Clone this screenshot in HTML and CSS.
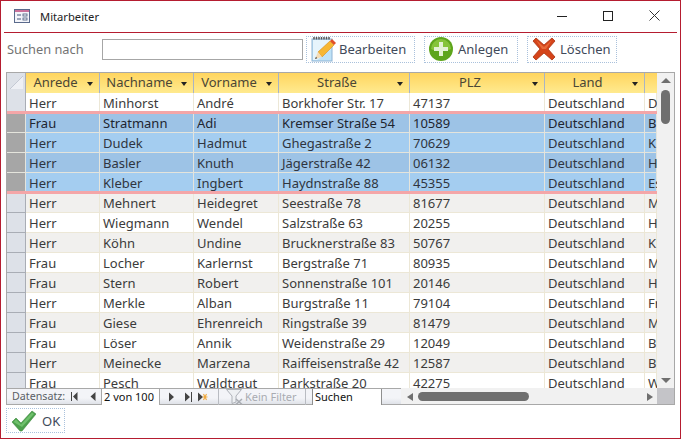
FILE: index.html
```html
<!DOCTYPE html>
<html lang="de">
<head>
<meta charset="utf-8">
<title>Mitarbeiter</title>
<link rel="stylesheet" href="styles.css">
</head>
<body>
<div class="window">
  <header class="titlebar">
    <svg class="title-icon" width="17" height="15" viewBox="0 0 17 15"><rect x=".5" y=".5" width="15" height="13" fill="#f4f5fa" stroke="#5a6a8c"/><rect x="1" y="1" width="14" height="2" fill="#c9709a"/><path d="M3 6h4M3 10h4" stroke="#47597c"/><rect x="9" y="5" width="4" height="2" fill="#fff" stroke="#47597c" stroke-width=".8"/><rect x="9" y="9" width="4" height="2" fill="#fff" stroke="#47597c" stroke-width=".8"/></svg>
    <span class="title-text">Mitarbeiter</span>
    <div class="win-controls">
      <svg width="10" height="10" viewBox="0 0 10 10"><path d="M0 5.500h10" stroke="#222"/></svg>
      <svg width="10" height="10" viewBox="0 0 10 10"><rect x=".5" y=".5" width="9" height="9" fill="none" stroke="#222"/></svg>
      <svg width="11" height="11" viewBox="0 0 11 11"><path d="M.5.5l10 10M10.500.5l-10 10" stroke="#333" fill="none"/></svg>
    </div>
  </header>

  <div class="toolbar">
    <label class="search-label">Suchen nach</label>
    <div class="search-input"></div>
    <div class="btn btn-edit">
      <svg width="26" height="26" viewBox="0 0 26 26"><rect x="2" y="3" width="20" height="22" fill="#bfe2f7" stroke="#8fb4d4"/><path d="M3 4h18v9L7 24H3z" fill="#e6f4fc"/><path d="M4 3.500v-2.500M6.500 3.500v-2.500M9 3.500v-2.500M11.500 3.500v-2.500M14 3.500v-2.500M16.500 3.500v-2.500M19 3.500v-2.500" stroke="#555" stroke-width="1.500"/><path d="M8 16L20 5l4 4L12 21z" fill="#f7b733" stroke="#d58a1a" stroke-width=".6"/><path d="M20 5l2-2 4 4-2 2z" fill="#e2502a"/><path d="M8 16l-3 7 7-2z" fill="#f5dcb5"/><path d="M6 20.700l-1 2.300 2.300-.8z" fill="#444"/></svg>
      <span>Bearbeiten</span>
    </div>
    <div class="btn btn-add">
      <svg width="24" height="24" viewBox="0 0 24 24"><circle cx="12" cy="12" r="12" fill="#5ea51c"/><path d="M2 12a10 10 0 0 1 20 0c-3 2-17 2-20 0z" fill="#86c43a"/><path d="M10 5h4v5h5v4h-5v5h-4v-5H5v-4h5z" fill="#e4f2d4"/></svg>
      <span>Anlegen</span>
    </div>
    <div class="btn btn-del">
      <svg width="24" height="24" viewBox="0 0 24 24"><path d="M4 1l8 7 8-7 3 3-7 8 7 8-3 3-8-7-8 7-3-3 7-8-7-8z" fill="#d5441a" stroke="#a83210" stroke-width=".8"/><path d="M4 3l8 7 8-7-6 9h-4z" fill="#e86a3a"/></svg>
      <span>Löschen</span>
    </div>
  </div>

  <div class="datasheet">
    <div class="sheet-body">
      <div class="row head">
        <div class="corner"><svg width="17" height="17" viewBox="0 0 17 17"><path d="M16 3L3 16h13z" fill="#eef0f5"/><path d="M16 3L3 16" stroke="#c4c9d4"/></svg></div>
        <div class="hcell"><span>Anrede</span><i class="arrow"></i></div>
        <div class="hcell"><span>Nachname</span><i class="arrow"></i></div>
        <div class="hcell"><span>Vorname</span><i class="arrow"></i></div>
        <div class="hcell"><span>Straße</span><i class="arrow"></i></div>
        <div class="hcell"><span>PLZ</span><i class="arrow"></i></div>
        <div class="hcell"><span>Land</span><i class="arrow"></i></div>
        <div class="hcell last"></div>
      </div>
      <div class="row first"><div class="sel"></div><div>Herr</div><div>Minhorst</div><div>André</div><div>Borkhofer Str. 17</div><div>47137</div><div>Deutschland</div><div>D</div></div>
      <div class="selection">
        <div class="row sr top current"><div class="sel"></div><div>Frau</div><div>Stratmann</div><div>Adi</div><div>Kremser Straße 54</div><div>10589</div><div>Deutschland</div><div>B</div></div>
        <div class="row sr light"><div class="sel"></div><div>Herr</div><div>Dudek</div><div>Hadmut</div><div>Ghegastraße 2</div><div>70629</div><div>Deutschland</div><div>K</div></div>
        <div class="row sr"><div class="sel"></div><div>Herr</div><div>Basler</div><div>Knuth</div><div>Jägerstraße 42</div><div>06132</div><div>Deutschland</div><div>H</div></div>
        <div class="row sr light end"><div class="sel"></div><div>Herr</div><div>Kleber</div><div>Ingbert</div><div>Haydnstraße 88</div><div>45355</div><div>Deutschland</div><div>Es</div></div>
      </div>
      <div class="row alt after"><div class="sel"></div><div>Herr</div><div>Mehnert</div><div>Heidegret</div><div>Seestraße 78</div><div>81677</div><div>Deutschland</div><div>M</div></div>
      <div class="row"><div class="sel"></div><div>Herr</div><div>Wiegmann</div><div>Wendel</div><div>Salzstraße 63</div><div>20255</div><div>Deutschland</div><div>H</div></div>
      <div class="row alt"><div class="sel"></div><div>Herr</div><div>Köhn</div><div>Undine</div><div>Brucknerstraße 83</div><div>50767</div><div>Deutschland</div><div>K</div></div>
      <div class="row"><div class="sel"></div><div>Frau</div><div>Locher</div><div>Karlernst</div><div>Bergstraße 71</div><div>80935</div><div>Deutschland</div><div>M</div></div>
      <div class="row alt"><div class="sel"></div><div>Frau</div><div>Stern</div><div>Robert</div><div>Sonnenstraße 101</div><div>20146</div><div>Deutschland</div><div>H</div></div>
      <div class="row"><div class="sel"></div><div>Herr</div><div>Merkle</div><div>Alban</div><div>Burgstraße 11</div><div>79104</div><div>Deutschland</div><div>Fr</div></div>
      <div class="row alt"><div class="sel"></div><div>Frau</div><div>Giese</div><div>Ehrenreich</div><div>Ringstraße 39</div><div>81479</div><div>Deutschland</div><div>M</div></div>
      <div class="row"><div class="sel"></div><div>Frau</div><div>Löser</div><div>Annik</div><div>Weidenstraße 29</div><div>12049</div><div>Deutschland</div><div>B</div></div>
      <div class="row alt"><div class="sel"></div><div>Herr</div><div>Meinecke</div><div>Marzena</div><div>Raiffeisenstraße 42</div><div>12587</div><div>Deutschland</div><div>B</div></div>
      <div class="row"><div class="sel"></div><div>Frau</div><div>Pesch</div><div>Waldtraut</div><div>Parkstraße 20</div><div>42275</div><div>Deutschland</div><div>W</div></div>
    </div>
    <div class="vscroll">
      <i class="tri tri-up"></i>
      <div class="vthumb"></div>
      <i class="tri tri-down"></i>
    </div>
    <div class="bottom">
      <div class="navbar">
        <span class="nav-label">Datensatz:</span>
        <svg class="nav-icons" width="25" height="9" viewBox="0 0 25 9"><path d="M.5 0v9" stroke="#444"/><path d="M6.500 0v9L2 4.500zM24.500 0v9L19.500 4.500z" fill="#444"/></svg>
        <div class="nav-pos">2 von 100</div>
        <svg class="nav-icons2" width="39" height="10" viewBox="0 0 39 10"><path d="M0 .5v9l5-4.500zM16 .5v9l5-4.500zM29 .5v9l5-4.500z" fill="#444"/><path d="M22.500 0v10" stroke="#444"/><path d="M37.500 2l-3 6M34.500 2l3 6M33.500 5h5" stroke="#f0a83c" stroke-width="1.100"/></svg>
        <div class="nav-sep sep-a"></div>
        <svg class="nav-filter" width="17" height="16" viewBox="0 0 17 16"><path d="M.5.5h15l-5.500 6.500v6l-4 1.500V7z" fill="#eef0f3" stroke="#aeb2b8"/><path d="M10 10l6 5.500M16 10l-6 5.500" stroke="#a8acb2" stroke-width="1.500"/></svg>
        <span class="nav-filter-text">Kein Filter</span>
        <div class="nav-sep"></div>
        <div class="nav-search">Suchen</div>
      </div>
      <div class="hscroll">
        <i class="tri tri-left"></i>
        <div class="hthumb"></div>
        <i class="tri tri-right"></i>
      </div>
    </div>
    <div class="grip"></div>
  </div>

  <div class="footer">
    <div class="btn btn-ok">
      <svg width="25" height="22" viewBox="0 0 25 22"><path d="M1 12l4-4 5 5L21 1l4 3-14 17h-2z" fill="#4da04c" stroke="#3c8a3e" stroke-width=".6"/><path d="M2.500 12l2.500-2.500 5 5L21 2.500l2 1.500-12 13z" fill="#6fc06c"/></svg>
      <span>OK</span>
    </div>
  </div>
</div>
</body>
</html>
```

FILE: styles.css
```css
* { box-sizing: border-box; }
html, body { margin: 0; padding: 0; }
body { width: 681px; height: 439px; overflow: hidden; background: #fff; font-family: "Noto Sans", "Open Sans", sans-serif; font-size: 13px; color: #3b3b3b; }
.window { width: 681px; height: 439px; border: 1px solid #b51d30; display: flex; flex-direction: column; padding: 0 3px; }

.titlebar { height: 32px; flex: none; display: flex; align-items: center; border-bottom: 1px solid #b51d30; padding-left: 10px; }
.title-icon { margin-top: -1px; }
.title-text { margin-left: 9px; margin-top: -1px; color: #222; font-size: 11.200px; }
.win-controls { margin-left: auto; margin-right: 17px; display: flex; align-items: center; gap: 36px; margin-top: -2px; }

.toolbar { height: 39px; flex: none; display: flex; align-items: center; padding-left: 3px; padding-bottom: 7px; }
.search-label { width: 95px; color: #737373; font-size: 12.800px; margin-top: -1px; }
.search-input { width: 201px; height: 21px; border: 1px solid #a6a6a6; background: #fff; margin-right: 3px; }
.btn { display: flex; align-items: center; border: 1px dotted #a9c1dc; height: 27px; color: #3f4a5a; font-size: 13px; }
.btn-edit { width: 109px; padding-left: 3px; gap: 3px; margin-right: 9px; }
.btn-add { width: 94px; padding-left: 4px; gap: 5px; margin-right: 9px; }
.btn-del { width: 90px; padding-left: 4px; gap: 4px; }

.datasheet { width: 669px; height: 333px; margin-left: 2px; flex: none; border: 1px solid #a8a8a8; display: grid; grid-template-columns: 650px 17px; grid-template-rows: 315px 16px; background: #f1f1f1; }
.sheet-body { overflow: hidden; background: #fff; }
.row { display: grid; grid-template-columns: 19px 74px 94px 85px 131px 135px 100px 12px; grid-template-rows: minmax(0, 1fr); height: 20px; line-height: 21px; background: #fff; border-bottom: 1px solid #ece7d6; }
.row > div { padding-left: 3px; border-right: 1px solid #ece7d6; white-space: nowrap; }
.row > .sel { background: #dde1e8; border-right: 1px solid #a9adb5; border-bottom: 1px solid #a9adb5; padding: 0; margin-bottom: -1px; }
.alt { background: #f1f0ee; }
.head { background: linear-gradient(#ffd55f, #ffea8f); border-bottom: 0; line-height: 18px; }
.row.head > div { padding: 0; }
.row.head > .corner { background: #dde1e8; border-right: 1px solid #a9adb5; }
.row.head > .hcell { display: flex; align-items: center; border-right: 1px solid #a9b4c4; font-size: 13px; color: #4a4636; padding-right: 6px; padding-bottom: 3px; }
.hcell span { flex: 1; text-align: center; padding-right: 2px; }
.row.head > .last { border-right: 0; }
.arrow { width: 0; height: 0; border: 3.500px solid transparent; border-top: 4px solid #222; border-bottom: 0; margin-top: 4px; }
.first { height: 18px; line-height: 20px; border-bottom: 0; }
.row.first > .sel { margin-bottom: 0; border-bottom: 0; }
.selection { border-top: 3px solid #f4a6a8; border-bottom: 3px solid #f4a6a8; }
.sr { background: #9dc3e6; border-bottom-color: #e4e4dc; color: #2f3540; }
.sr.light { background: #a4cdf0; }
.sr > div { border-right-color: #e4e4dc; }
.row.sr > .sel { background: #a6a6a6; border-right: 1px solid #e4e4dc; border-bottom: 0; margin-bottom: 0; }
.top { height: 19px; line-height: 18px; }
.current { color: #1e2530; }
.end { height: 18px; line-height: 20px; border-bottom: 0; }
.after { height: 19px; line-height: 18px; }

.vscroll { display: flex; flex-direction: column; align-items: center; padding: 5px 0 5px; background: #f1f1f1; }
.vthumb { width: 9px; height: 34px; border-radius: 5px; background: #6f6f6f; margin-top: 7px; margin-bottom: auto; }
.tri { display: block; width: 0; height: 0; border-style: solid; border-color: transparent; flex: none; }
.tri-up { border-width: 0 5px 5px; border-bottom-color: #6f6f6f; }
.tri-down { border-width: 5px 5px 0; border-top-color: #6f6f6f; }
.tri-left { border-width: 4.500px 6px 4.500px 0; border-right-color: #6f6f6f; }
.tri-right { border-width: 4.500px 0 4.500px 6px; border-left-color: #6f6f6f; }

.bottom { display: flex; min-width: 0; }
.navbar { width: 394px; flex: none; display: flex; align-items: center; background: linear-gradient(#f3f4f8 60%, #dfe2e8); border-top: 1px solid #a8a8a8; font-size: 10.700px; color: #5a5f66; padding-left: 5px; }
.nav-label { width: 59px; flex: none; line-height: 1; }
.nav-icons { flex: none; }
.nav-pos { width: 59px; height: 16px; flex: none; background: #fff; border: 1px solid #a8a8a8; border-top: 0; border-bottom: 0; line-height: 16px; padding-left: 2px; color: #111; font-size: 11px; margin-left: 5px; }
.nav-icons2 { flex: none; margin-left: 9px; }
.nav-sep { width: 1px; height: 16px; background: #b9bcc2; margin-left: 9px; flex: none; }
.sep-a { margin-left: 10px; }
.nav-filter { flex: none; margin-left: 7px; }
.nav-filter-text { color: #a9acb2; width: 51px; flex: none; margin-left: 2px; font-size: 11px; white-space: nowrap; }
.nav-search { width: 70px; height: 16px; flex: none; margin-left: 6px; background: #fff; border: 1px solid #8f8f8f; border-top: 0; border-bottom: 0; line-height: 16px; padding-left: 2px; color: #111; font-size: 11px; }

.hscroll { flex: 1; display: flex; align-items: center; padding: 0 4px 0 6px; background: #f1f1f1; border-top: 1px solid #f1f1f1; }
.hthumb { width: 111px; height: 9px; border-radius: 5px; background: #6f6f6f; margin-left: 5px; margin-right: auto; }
.grip { background: #c4c4c8; }

.footer { flex: 1; padding: 3px 0 0 2px; }
.btn-ok { width: 59px; height: 25px; padding-left: 4px; gap: 6px; color: #3f4a5a; }
```
